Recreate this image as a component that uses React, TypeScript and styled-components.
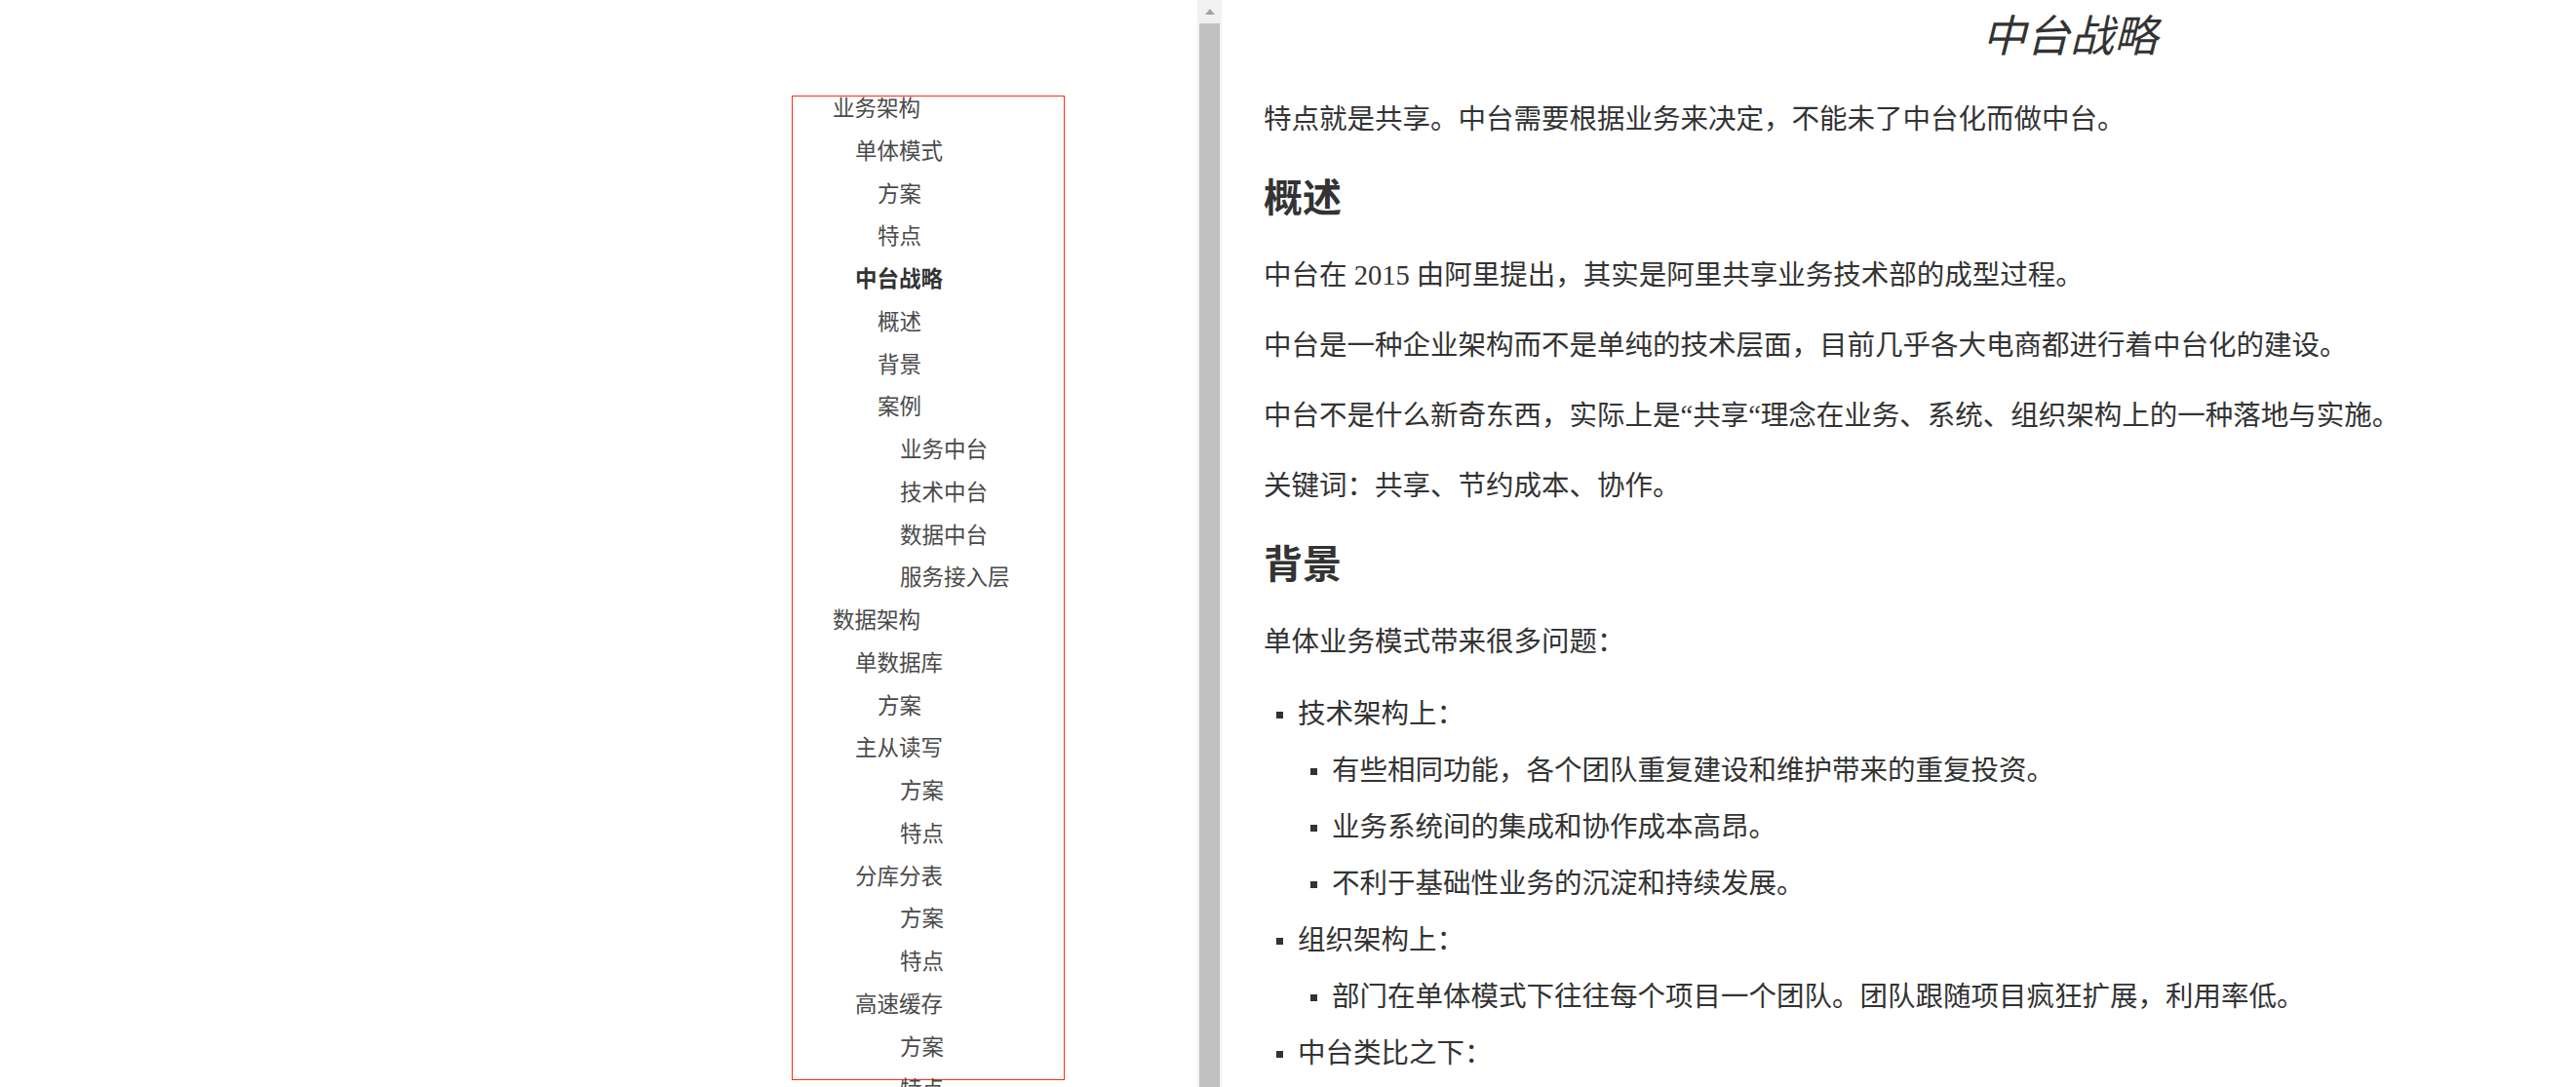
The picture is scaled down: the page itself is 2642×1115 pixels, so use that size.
import React from 'react';
import styled, {createGlobalStyle} from "styled-components";

const GlobalStyle = createGlobalStyle`
    html, body {
      margin: 0;
      padding: 0;
      height: 100%;
      overflow: hidden;
      background: #FFFFFF;
    }
    #root {
      height: 100%;
    }
`

const Page = styled.div`
    display: flex;
    height: 100vh;
    overflow: hidden;
`

const Sidebar = styled.aside`
    flex: none;
    width: 1228px;
    box-sizing: border-box;
    padding: 98px 0 0 812px;
`

const TocBox = styled.nav`
    width: 280px;
    height: 1010px;
    box-sizing: border-box;
    border: 1px solid #FF2D10;
`

const TocList = styled.ul`
    list-style: none;
    margin: -11px 0 0;
    padding: 0 0 0 41px;
    font-family: "Noto Sans CJK SC", sans-serif;
    font-size: 22.5px;
`

const TocItem = styled.li<{ $level: number; $active?: boolean }>`
    height: 43.75px;
    line-height: 43.75px;
    padding-left: ${p => p.$level * 23}px;
    white-space: nowrap;
    color: ${p => p.$active ? '#333333' : '#4A4A4A'};
    font-weight: ${p => p.$active ? 700 : 400};
`

const ScrollTrack = styled.div`
    flex: none;
    width: 25px;
    background: #F1F1F1;
    display: flex;
    flex-direction: column;
    align-items: center;
`

const ScrollArrow = styled.div`
    flex: none;
    width: 100%;
    height: 24px;
    display: flex;
    align-items: center;
    justify-content: center;

    &::after {
      content: '';
      width: 0;
      height: 0;
      border-left: 5.5px solid transparent;
      border-right: 5.5px solid transparent;
      border-bottom: 6px solid #A3A3A3;
    }
`

const ScrollThumb = styled.div`
    flex: 1;
    width: 21px;
    background: #C1C1C1;
`

const Content = styled.main`
    flex: 1;
    min-width: 0;
    padding-left: 43px;
    color: #333333;
    font-family: "Liberation Serif", "Noto Sans CJK SC", serif;
    font-size: 28.5px;
    text-spacing-trim: space-all;
`

const Title = styled.h1`
    margin: 0 0 2px;
    padding-left: 737px;
    height: 68px;
    line-height: 68px;
    font-family: "Noto Sans CJK SC", sans-serif;
    font-size: 45px;
    font-style: italic;
    font-weight: 400;
    white-space: nowrap;
`

const Heading = styled.h2`
    margin: 32px 0 2px;
    line-height: 56px;
    font-family: "Noto Sans CJK SC", sans-serif;
    font-size: 40px;
    font-weight: 700;
`

const Para = styled.p`
    margin: 28px 0 0;
    padding-top: 10px;
    line-height: 34px;
    white-space: nowrap;
`

const List = styled.ul`
    list-style: none;
    margin: 30px 0 0;
    padding: 0 0 0 13px;
`

const SubList = styled.ul`
    list-style: none;
    margin: 14px 0 0;
    padding: 0 0 0 35px;
`

const Item = styled.li`
    & + & {
      margin-top: 14px;
    }
`

const Line = styled.div`
    display: flex;
    align-items: center;
    padding-top: 10px;
    line-height: 34px;
    white-space: nowrap;

    &::before {
      content: '';
      flex: none;
      width: 7px;
      height: 7px;
      margin-right: 15px;
      background: #333333;
    }
`

const toc: { text: string; level: number; active?: boolean }[] = [
    {text: '业务架构', level: 0},
    {text: '单体模式', level: 1},
    {text: '方案', level: 2},
    {text: '特点', level: 2},
    {text: '中台战略', level: 1, active: true},
    {text: '概述', level: 2},
    {text: '背景', level: 2},
    {text: '案例', level: 2},
    {text: '业务中台', level: 3},
    {text: '技术中台', level: 3},
    {text: '数据中台', level: 3},
    {text: '服务接入层', level: 3},
    {text: '数据架构', level: 0},
    {text: '单数据库', level: 1},
    {text: '方案', level: 2},
    {text: '主从读写', level: 1},
    {text: '方案', level: 3},
    {text: '特点', level: 3},
    {text: '分库分表', level: 1},
    {text: '方案', level: 3},
    {text: '特点', level: 3},
    {text: '高速缓存', level: 1},
    {text: '方案', level: 3},
    {text: '特点', level: 3},
];

const App = () => {
    return (
        <>
            <GlobalStyle/>
            <Page>
                <Sidebar>
                    <TocBox>
                        <TocList>
                            {toc.map((t, i) => (
                                <TocItem key={i} $level={t.level} $active={t.active}>{t.text}</TocItem>
                            ))}
                        </TocList>
                    </TocBox>
                </Sidebar>
                <ScrollTrack>
                    <ScrollArrow/>
                    <ScrollThumb/>
                </ScrollTrack>
                <Content>
                    <Title>中台战略</Title>
                    <Para>特点就是共享。中台需要根据业务来决定，不能未了中台化而做中台。</Para>
                    <Heading>概述</Heading>
                    <Para>中台在 2015 由阿里提出，其实是阿里共享业务技术部的成型过程。</Para>
                    <Para>中台是一种企业架构而不是单纯的技术层面，目前几乎各大电商都进行着中台化的建设。</Para>
                    <Para>中台不是什么新奇东西，实际上是“共享“理念在业务、系统、组织架构上的一种落地与实施。</Para>
                    <Para>关键词：共享、节约成本、协作。</Para>
                    <Heading>背景</Heading>
                    <Para>单体业务模式带来很多问题：</Para>
                    <List>
                        <Item>
                            <Line>技术架构上：</Line>
                            <SubList>
                                <Item><Line>有些相同功能，各个团队重复建设和维护带来的重复投资。</Line></Item>
                                <Item><Line>业务系统间的集成和协作成本高昂。</Line></Item>
                                <Item><Line>不利于基础性业务的沉淀和持续发展。</Line></Item>
                            </SubList>
                        </Item>
                        <Item>
                            <Line>组织架构上：</Line>
                            <SubList>
                                <Item><Line>部门在单体模式下往往每个项目一个团队。团队跟随项目疯狂扩展，利用率低。</Line></Item>
                            </SubList>
                        </Item>
                        <Item>
                            <Line>中台类比之下：</Line>
                        </Item>
                    </List>
                </Content>
            </Page>
        </>
    );
};

export default App;
